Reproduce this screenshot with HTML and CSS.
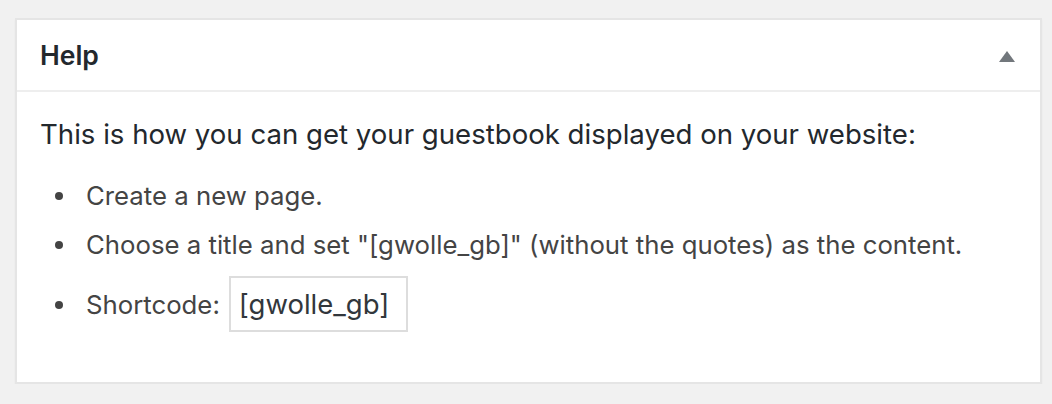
FILE: index.html
```html
<!DOCTYPE html>
<html>
<head>
<meta charset="utf-8">
<link rel="stylesheet" href="styles.css">
</head>
<body>
<div class="postbox">
  <div class="postbox-header">
    <h2 class="hndle">Help</h2>
    <span class="toggle-indicator" aria-hidden="true"></span>
  </div>
  <div class="inside">
    <p class="intro">This is how you can get your guestbook displayed on your website:</p>
    <ul class="steps">
      <li>Create a new page.</li>
      <li>Choose a title and set "[gwolle_gb]" (without the quotes) as the content.</li>
      <li class="shortcode-row">Shortcode: <input class="shortcode" type="text" value="[gwolle_gb]" readonly></li>
    </ul>
  </div>
</div>
</body>
</html>
```
FILE: styles.css
```css
html, body {
  margin: 0;
  padding: 0;
  background: #f1f1f1;
}
body {
  padding: 18px 10px 0 15px;
  font-family: Inter, "Liberation Sans", Arial, sans-serif;
}
.postbox {
  width: 1023px;
  height: 362px;
  background: #fff;
  border: 2px solid #e5e5e5;
  box-shadow: 0 2px 2px rgba(0,0,0,0.04);
}
.postbox-header {
  height: 70px;
  border-bottom: 2px solid #eeeeee;
  display: flex;
  align-items: center;
  justify-content: space-between;
  padding: 0 25px 0 23px;
}
.hndle {
  margin: 0;
  font-size: 26.5px;
  font-weight: 600;
  color: #23282d;
}
.toggle-indicator {
  width: 0;
  height: 0;
  border-left: 8px solid transparent;
  border-right: 8px solid transparent;
  border-bottom: 11px solid #72777c;
  margin-top: 2px;
}
.inside {
  padding: 22px 23px 0;
}
.intro {
  margin: 0 0 22px;
  font-size: 27.6px;
  line-height: 40px;
  color: #23282d;
}
.steps {
  margin: 0;
  padding: 0 0 0 46px;
  list-style: none;
  color: #444;
  font-size: 25.75px;
}
.steps li {
  display: flex;
  align-items: center;
  line-height: 40px;
  margin-bottom: 9px;
}
.steps li:nth-child(2) {
  margin-bottom: 12px;
}
.steps li::before {
  content: "";
  flex: none;
  width: 8px;
  height: 8px;
  border-radius: 50%;
  background: #444;
  margin: 0 23px 0 -31px;
}
.shortcode {
  font-family: Inter, "Liberation Sans", Arial, sans-serif;
  font-size: 27.5px;
  color: #32373c;
  width: 179px;
  height: 56px;
  box-sizing: border-box;
  padding: 0 8px;
  border: 2px solid #dddddd;
  margin-left: 9px;
  margin-top: -1px;
  background: #fff;
}
```
